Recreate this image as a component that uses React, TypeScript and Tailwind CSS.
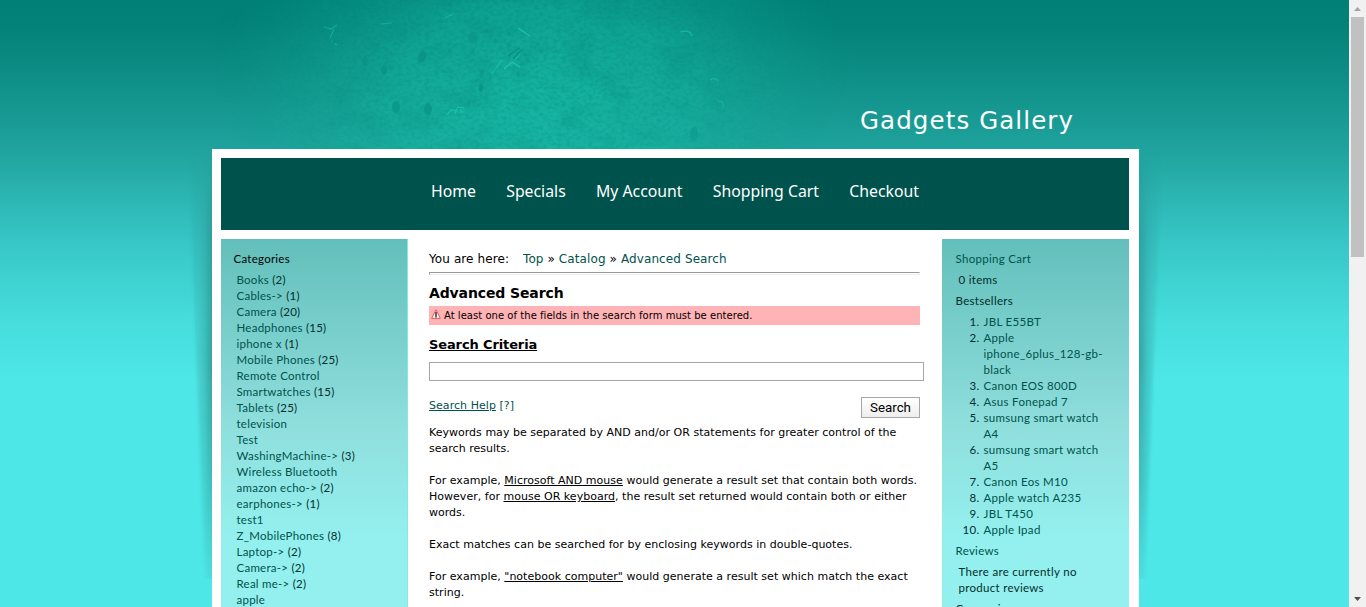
import React from "react";

const categories: [string, string][] = [
  ["Books", "(2)"], ["Cables->", "(1)"], ["Camera", "(20)"], ["Headphones", "(15)"],
  ["iphone x", "(1)"], ["Mobile Phones", "(25)"], ["Remote Control", ""], ["Smartwatches", "(15)"],
  ["Tablets", "(25)"], ["television", ""], ["Test", ""], ["WashingMachine->", "(3)"],
  ["Wireless Bluetooth", ""], ["amazon echo->", "(2)"], ["earphones->", "(1)"], ["test1", ""],
  ["Z_MobilePhones", "(8)"], ["Laptop->", "(2)"], ["Camera->", "(2)"], ["Real me->", "(2)"], ["apple", ""],
];

const bestsellers: string[][] = [
  ["JBL E55BT"], ["Apple", "iphone_6plus_128-gb-", "black"], ["Canon EOS 800D"], ["Asus Fonepad 7"],
  ["sumsung smart watch", "A4"], ["sumsung smart watch", "A5"], ["Canon Eos M10"],
  ["Apple watch A235"], ["JBL T450"], ["Apple Ipad"],
];

function Texture() {
  return (
    <svg className="absolute left-[130px] top-0" width="760" height="149" viewBox="0 0 760 149">
      <defs>
        <radialGradient id="glow" gradientUnits="userSpaceOnUse" cx="0" cy="0" r="1" gradientTransform="translate(410 105) scale(330 215)">
          <stop offset="0" stopColor="#16bba7" stopOpacity="0.85" />
          <stop offset="0.45" stopColor="#14b5a1" stopOpacity="0.65" />
          <stop offset="1" stopColor="#109c8d" stopOpacity="0" />
        </radialGradient>
        <radialGradient id="fade" gradientUnits="userSpaceOnUse" cx="0" cy="0" r="1" gradientTransform="translate(400 60) scale(320 190)">
          <stop offset="0" stopColor="#fff" />
          <stop offset="0.5" stopColor="#bbb" />
          <stop offset="1" stopColor="#000" />
        </radialGradient>
        <mask id="m"><rect width="760" height="149" fill="url(#fade)" /></mask>
        <filter id="rough" x="0" y="0" width="100%" height="100%" colorInterpolationFilters="sRGB">
          <feTurbulence type="fractalNoise" baseFrequency="0.22 0.3" numOctaves="3" seed="8" />
          <feColorMatrix type="matrix" values="0 0 0 0 0  0 0 0 0 0.45  0 0 0 0 0.41  1.4 0 0 0 -0.55" />
        </filter>
        <filter id="patch" x="0" y="0" width="100%" height="100%" colorInterpolationFilters="sRGB">
          <feTurbulence type="fractalNoise" baseFrequency="0.03 0.045" numOctaves="5" seed="21" />
          <feColorMatrix type="matrix" values="0 0 0 0 0.02  0 0 0 0 0.52  0 0 0 0 0.48  0 2.6 0 0 -1.15" />
        </filter>
      </defs>
      <rect width="760" height="149" fill="url(#glow)" />
      <g mask="url(#m)">
        <rect width="760" height="149" filter="url(#patch)" opacity="0.3" />
        <rect width="760" height="149" filter="url(#rough)" opacity="0.4" />
        <g fill="#078f83" opacity="0.85">
          <ellipse cx="292" cy="57" rx="4" ry="6" transform="rotate(20 292 57)" />
          <ellipse cx="266" cy="107" rx="4" ry="6" />
          <ellipse cx="298" cy="109" rx="4" ry="6" />
          <ellipse cx="254" cy="70" rx="3" ry="5" />
          <ellipse cx="235" cy="61" rx="2.5" ry="5" />
          <ellipse cx="564" cy="134" rx="4" ry="7" />
          <ellipse cx="196" cy="5" rx="4" ry="5" />
          <ellipse cx="343" cy="38" rx="5" ry="6" opacity="0.6" />
          <ellipse cx="351" cy="88" rx="2" ry="4" />
        </g>
        <g fill="none" stroke="#1fcdb9" strokeWidth="1.2" opacity="0.8">
          <path d="M194 27l7 2 6-4m-3 4-4 9m1 3 6 4" />
          <path d="M317 115l4-5 5 1 2-4 6 1m-8 2-1 4m5-5 2 4" />
          <path d="M374 69l8-7 8 5m-4-8 6-9M388 28l12 8m150-4q10-3 12 4M580 80q6-3 8 1M587 101q8 0 6 6" />
          <path d="M250 24l12-1M315 18l8-4M372 60l-10 14" opacity="0.7" />
        </g>
        <path d="M131 79l5-4m0 7 6-7m-1 8 4-4M378 56l12-8m-7 11 9-9M201 43l6-3m-6 7 4-5" stroke="#078f83" strokeWidth="1.5" fill="none" />
      </g>
    </svg>
  );
}

export default function App() {
  return (
    <div className="flex h-[607px] w-[1366px] overflow-hidden font-['DejaVu_Sans',sans-serif] text-[11px] leading-4 text-black">
      <div className="relative h-[607px] w-[1349px] shrink-0 overflow-hidden bg-[linear-gradient(to_bottom,#008077_0px,#038279_25px,#0c8c84_70px,#20a39e_150px,#36c6c5_240px,#46dddc_320px,#4de7e7_380px)]">
        <Texture />
        <svg className="absolute left-[185px] top-[149px]" width="980" height="430" viewBox="0 0 980 430">
          <defs>
            <linearGradient id="sl" x1="0" x2="1">
              <stop offset="0" stopColor="#1f6664" stopOpacity="0" />
              <stop offset="0.5" stopColor="#1f6664" stopOpacity="0.25" />
              <stop offset="1" stopColor="#1f6664" stopOpacity="0.75" />
            </linearGradient>
            <linearGradient id="sr" x1="1" x2="0">
              <stop offset="0" stopColor="#1f6664" stopOpacity="0" />
              <stop offset="0.5" stopColor="#1f6664" stopOpacity="0.25" />
              <stop offset="1" stopColor="#1f6664" stopOpacity="0.75" />
            </linearGradient>
            <linearGradient id="v" x1="0" x2="0" y1="0" y2="1">
              <stop offset="0" stopColor="#000" />
              <stop offset="0.2" stopColor="#bbb" />
              <stop offset="0.5" stopColor="#fff" />
              <stop offset="0.75" stopColor="#aaa" />
              <stop offset="1" stopColor="#222" />
            </linearGradient>
            <mask id="vm"><rect width="980" height="430" fill="url(#v)" /></mask>
            <filter id="soft"><feGaussianBlur stdDeviation="1.5 0" /></filter>
          </defs>
          <g mask="url(#vm)" filter="url(#soft)">
            <path d="M3 0H34V430H20Z" fill="url(#sl)" />
            <path d="M977 0H947V430H960Z" fill="url(#sr)" />
          </g>
        </svg>

        <div className="relative ml-[212px] w-[927px]">
          <header className="h-[149px] pl-[648px] pt-[105px] text-[24.5px] leading-8 tracking-[1.1px] text-white">
            <h1 className="whitespace-nowrap">Gadgets Gallery</h1>
          </header>
          <div className="h-[458px] bg-white pl-[9px] pt-[9px]">
            <nav className="flex h-[72px] w-[908px] justify-center bg-[#00524c] pt-[21px] font-['Noto_Sans',sans-serif] text-[15.8px] leading-6 text-white">
              <div className="flex w-[488px] justify-between whitespace-nowrap">
                <a>Home</a><a>Specials</a><a>My Account</a><a>Shopping Cart</a><a>Checkout</a>
              </div>
            </nav>
            <div className="mt-[9px] flex">
              <aside className="h-[368px] w-[187px] shrink-0 overflow-hidden border-r border-[#84e8e6] bg-[linear-gradient(to_bottom,#63bfbb,#8fdfdd_190px,#93f0ee_300px)] pt-3 font-['Lato',sans-serif] text-[11.5px] tracking-[0.25px] text-[#00524c]">
                <h2 className="pl-[12.5px] text-black">Categories</h2>
                <ul className="mt-[5px] pl-[15.5px]">
                  {categories.map(([name, count]) => (
                    <li key={name} className="whitespace-nowrap"><a>{name}</a> <span className="text-[#032e2b]">{count}</span></li>
                  ))}
                </ul>
              </aside>
              <main className="w-[534px] shrink-0 pl-[21px]">
                <div className="flex pt-3 text-[12px] leading-4 tracking-[0.1px]">
                  <span className="w-[94px]">You are here:</span>
                  <span className="whitespace-nowrap"><a className="text-[#00524c]">Top</a> » <a className="text-[#00524c]">Catalog</a> » <a className="text-[#00524c]">Advanced Search</a></span>
                </div>
                <hr className="mt-[5px] h-[3px] w-[491px] border border-b-[#eee] border-l-[#9a9a9a] border-r-[#eee] border-t-[#9a9a9a]" />
                <h1 className="mt-[8px] text-[14px] font-bold leading-5 tracking-[-0.12px]">Advanced Search</h1>
                <div className="mt-[3px] flex h-[19px] w-[491px] items-center bg-[#ffb3b5] text-[10px] tracking-[0.035px]">
                  <svg className="mb-[3px] ml-[2px] mr-[3px]" width="10" height="10" viewBox="0 0 10 10">
                    <path d="M5 .8 9.3 9.3H.7Z" fill="#fff" stroke="#e5525a" strokeWidth="1" />
                    <path d="M5 3v5.5" stroke="#555" strokeWidth="1.8" />
                  </svg>
                  <span className="whitespace-nowrap">At least one of the fields in the search form must be entered.</span>
                </div>
                <h2 className="mt-3 text-[13px] font-bold leading-4 tracking-[-0.12px] underline">Search Criteria</h2>
                <input aria-label="Search Criteria" className="mt-[9px] block h-[19px] w-[495px] border border-[#a6a6a6] bg-white" />
                <div className="mt-4 flex h-[21px] w-[491px] items-start justify-between">
                  <span className="pt-px tracking-[0.05px] text-[#00524c]"><a className="underline">Search Help</a> [?]</span>
                  <button className="h-[21px] w-[59px] border border-[#a6a6a6] bg-linear-to-b from-white to-[#eeeeee] font-['Roboto',sans-serif] text-[13.33px] leading-[18px]">Search</button>
                </div>
                <div className="mt-[7px] whitespace-nowrap tracking-[0.02px]">
                  <p>Keywords may be separated by AND and/or OR statements for greater control of the<br />search results.</p>
                  <p className="mt-4">For example, <u>Microsoft AND mouse</u> would generate a result set that contain both words.<br />However, for <u>mouse OR keyboard</u>, the result set returned would contain both or either<br />words.</p>
                  <p className="mt-4">Exact matches can be searched for by enclosing keywords in double-quotes.</p>
                  <p className="mt-4">For example, <u>"notebook computer"</u> would generate a result set which match the exact<br />string.</p>
                </div>
              </main>
              <aside className="h-[368px] w-[187px] shrink-0 overflow-hidden bg-[linear-gradient(to_bottom,#63bfbb,#8fdfdd_190px,#93f0ee_300px)] pl-[13.5px] pt-3 font-['Lato',sans-serif] text-[11.5px] tracking-[0.3px] text-[#032e2b]">
                <h2 className="text-[#00524c]">Shopping Cart</h2>
                <p className="mt-[5px] pl-[3px]">0 items</p>
                <h2 className="mt-[5px]">Bestsellers</h2>
                <ol className="mt-[5px]">
                  {bestsellers.map((lines, i) => (
                    <li key={i} className="flex gap-1">
                      <span className="w-6 text-right">{i + 1}.</span>
                      <a className="whitespace-nowrap text-[#00524c]">{lines.map((l) => <span key={l} className="block">{l}</span>)}</a>
                    </li>
                  ))}
                </ol>
                <h2 className="mt-[5px] text-[#00524c]">Reviews</h2>
                <p className="mt-[5px] pl-[3px]">There are currently no<br />product reviews</p>
                <h2 className="mt-[5px]">Currencies</h2>
              </aside>
            </div>
          </div>
        </div>
      </div>
      <div className="flex h-[607px] w-[17px] shrink-0 flex-col items-center bg-[#f1f1f1]">
        <svg width="17" height="17" viewBox="0 0 17 17"><path d="M5 11h7L8.5 7Z" fill="#a3a3a3" /></svg>
        <div className="h-[240px] w-[13px] bg-[#c1c1c1]" />
        <svg className="mt-auto" width="17" height="17" viewBox="0 0 17 17"><path d="M5 7h7L8.5 11Z" fill="#505050" /></svg>
      </div>
    </div>
  );
}
